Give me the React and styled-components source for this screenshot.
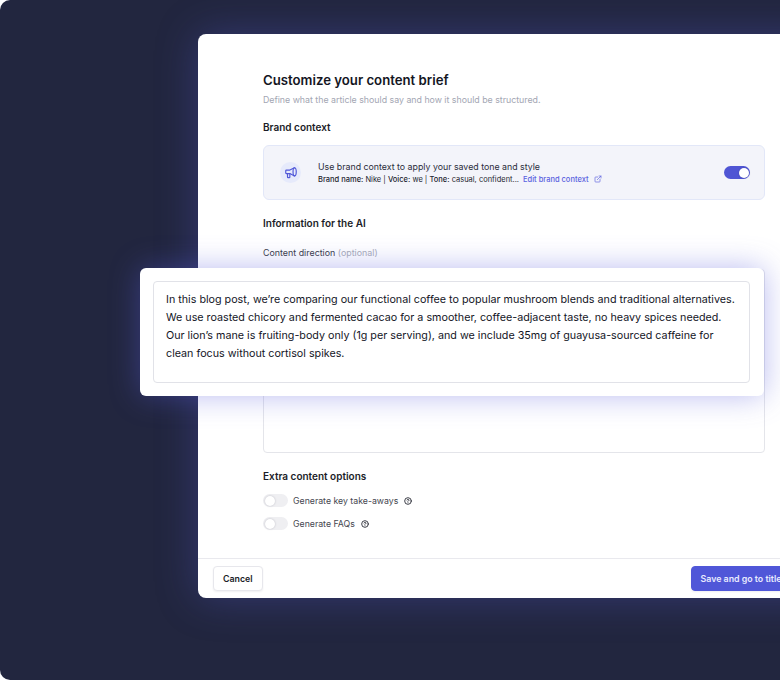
import React from "react";
import styled, { createGlobalStyle } from "styled-components";
import { ExternalLink, CircleHelp } from "lucide-react";

const Global = createGlobalStyle`
  html, body { margin: 0; padding: 0; background: #fff; }
  * { box-sizing: border-box; }
  body { font-family: Inter, "Liberation Sans", sans-serif; }
`;

const Stage = styled.div`
  position: relative;
  width: 780px;
  height: 680px;
  overflow: hidden;
  background: #22263f;
  border-radius: 10px 0 0 10px;
  padding: 34px 0 0 198px;
`;

const Modal = styled.div`
  width: 640px;
  height: 564px;
  background: #fff;
  border-radius: 8px;
  box-shadow: 0 0 40px rgba(88, 94, 215, 0.34);
  display: flex;
  flex-direction: column;
`;

const Body = styled.div`
  flex: 1;
  padding: 38px 73px 0 65px;
  display: flex;
  flex-direction: column;
`;

const Title = styled.h1`
  margin: 0;
  font-size: 13.2px;
  line-height: 17px;
  font-weight: 600;
  color: #14161f;
`;

const Subtitle = styled.p`
  margin: 5px 0 0;
  font-size: 8.8px;
  line-height: 12px;
  color: #a3a6b3;
`;

const SectionTitle = styled.h2`
  margin: ${(p) => p.$top}px 0 0;
  font-size: 10px;
  line-height: 13px;
  font-weight: 600;
  color: #1b1d28;
`;

const BrandCard = styled.div`
  margin-top: 11px;
  height: 55px;
  display: flex;
  align-items: center;
  padding: 0 14px 0 16px;
  background: #f3f4fa;
  border: 1px solid #e2e7f8;
  border-radius: 6px;
`;

const IconBubble = styled.div`
  width: 21px;
  height: 21px;
  flex: none;
  border-radius: 50%;
  background: #e6eafb;
  color: #5057d8;
  display: flex;
  align-items: center;
  justify-content: center;
`;

const BrandText = styled.div`
  margin-left: 17px;
  flex: 1;
`;

const BrandLead = styled.div`
  font-size: 8.8px;
  line-height: 12px;
  color: #2b2d3a;
`;

const BrandMeta = styled.div`
  margin-top: 1px;
  display: flex;
  align-items: center;
  font-size: 7.5px;
  line-height: 11px;
  color: #23252f;
  white-space: nowrap;
`;

const Strong = styled.span`
  font-weight: 500;
`;

const EditLink = styled.a`
  margin-left: 4px;
  display: flex;
  align-items: center;
  gap: 5px;
  font-weight: 500;
  color: #5a61e0;
`;

const Track = styled.div`
  width: ${(p) => (p.$on ? 26 : 25)}px;
  height: 13px;
  flex: none;
  padding: 1.5px;
  border-radius: 7px;
  display: flex;
  justify-content: ${(p) => (p.$on ? "flex-end" : "flex-start")};
  background: ${(p) => (p.$on ? "#4f55d4" : "#efeff2")};
`;

const Knob = styled.div`
  width: 10px;
  height: 10px;
  border-radius: 50%;
  background: #fff;
  box-shadow: 0 0 2px rgba(30, 30, 60, 0.25);
`;

const FieldLabel = styled.div`
  margin-top: 17px;
  font-size: 8.9px;
  line-height: 12px;
  color: #3a3c48;
`;

const Optional = styled.span`
  color: #a9acb8;
`;

const TextArea = styled.div`
  margin-top: 10px;
  height: 184px;
  background: #fff;
  border: 1px solid #e4e5ea;
  border-radius: 4px;
`;

const OptionRow = styled.div`
  margin-top: ${(p) => p.$top}px;
  height: 13px;
  display: flex;
  align-items: center;
  color: #22242e;
`;

const OptionLabel = styled.span`
  margin-left: 5px;
  margin-right: 6px;
  font-size: 8.75px;
  color: #45474f;
`;

const Footer = styled.div`
  height: 40px;
  flex: none;
  border-top: 1px solid #e9e9ee;
  padding: 7px 0 0 15px;
  display: flex;
  gap: 428px;
`;

const Button = styled.button`
  height: 25px;
  flex: none;
  padding: 0 9px;
  border-radius: 4px;
  font-family: inherit;
  font-size: 8.8px;
  font-weight: 600;
  border: 1px solid ${(p) => (p.$primary ? "#5057d8" : "#e7e7ec")};
  background: ${(p) => (p.$primary ? "#5057d8" : "#fff")};
  color: ${(p) => (p.$primary ? "#e9ebff" : "#1b1d28")};
  box-shadow: 0 1px 2px rgba(30, 30, 60, 0.07);
`;

const Overlay = styled.div`
  position: absolute;
  left: 140px;
  top: 268px;
  width: 624px;
  height: 128px;
  padding: 13px 14px 13px 13px;
  background: #fff;
  border-radius: 6px;
  box-shadow: 0 0 30px rgba(88, 94, 220, 0.42);
`;

const OverlayBox = styled.div`
  height: 102px;
  padding: 9px 12px 0;
  border: 1px solid #e1e2e8;
  border-radius: 4px;
  font-size: 10.74px;
  line-height: 18px;
  color: #14161f;
`;

const BrandIcon = () => (
  <svg width="14" height="14" viewBox="0 0 24 24" fill="none" stroke="currentColor" strokeWidth="2" strokeLinejoin="round" strokeLinecap="round">
    <path d="M4 7h6l8-4c2 0 3 3.5 3 7s-1 7-3 7l-8-4H4a1 1 0 0 1-1-1V8a1 1 0 0 1 1-1z" />
    <path d="M18 3c-1.500 0-2.500 3.500-2.500 7s1 7 2.500 7" />
    <path d="M6 13v6a1 1 0 0 0 1 1h2a1 1 0 0 0 1-1v-6" />
  </svg>
);

const App = () => {
  return (
    <Stage>
      <Global />
      <Modal>
        <Body>
          <Title>Customize your content brief</Title>
          <Subtitle>Define what the article should say and how it should be structured.</Subtitle>
          <SectionTitle $top={15}>Brand context</SectionTitle>
          <BrandCard>
            <IconBubble>
              <BrandIcon />
            </IconBubble>
            <BrandText>
              <BrandLead>Use brand context to apply your saved tone and style</BrandLead>
              <BrandMeta>
                <span>
                  <Strong>Brand name:</Strong> Nike | <Strong>Voice:</Strong> we | <Strong>Tone:</Strong> casual, confident...
                </span>
                <EditLink>
                  Edit brand context <ExternalLink size={8} />
                </EditLink>
              </BrandMeta>
            </BrandText>
            <Track $on>
              <Knob />
            </Track>
          </BrandCard>
          <SectionTitle $top={17}>Information for the AI</SectionTitle>
          <FieldLabel>
            Content direction <Optional>(optional)</Optional>
          </FieldLabel>
          <TextArea />
          <SectionTitle $top={17}>Extra content options</SectionTitle>
          <OptionRow $top={11}>
            <Track>
              <Knob />
            </Track>
            <OptionLabel>Generate key take-aways</OptionLabel>
            <CircleHelp size={8} strokeWidth={2.6} />
          </OptionRow>
          <OptionRow $top={10}>
            <Track>
              <Knob />
            </Track>
            <OptionLabel>Generate FAQs</OptionLabel>
            <CircleHelp size={8} strokeWidth={2.6} />
          </OptionRow>
        </Body>
        <Footer>
          <Button>Cancel</Button>
          <Button $primary>Save and go to titles</Button>
        </Footer>
      </Modal>
      <Overlay>
        <OverlayBox>
          In this blog post, we’re comparing our functional coffee to popular mushroom blends and traditional alternatives.
          We use roasted chicory and fermented cacao for a smoother, coffee-adjacent taste, no heavy spices needed.
          Our lion’s mane is fruiting-body only (1g per serving), and we include 35mg of guayusa-sourced caffeine for
          clean focus without cortisol spikes.
        </OverlayBox>
      </Overlay>
    </Stage>
  );
};

export default App;
